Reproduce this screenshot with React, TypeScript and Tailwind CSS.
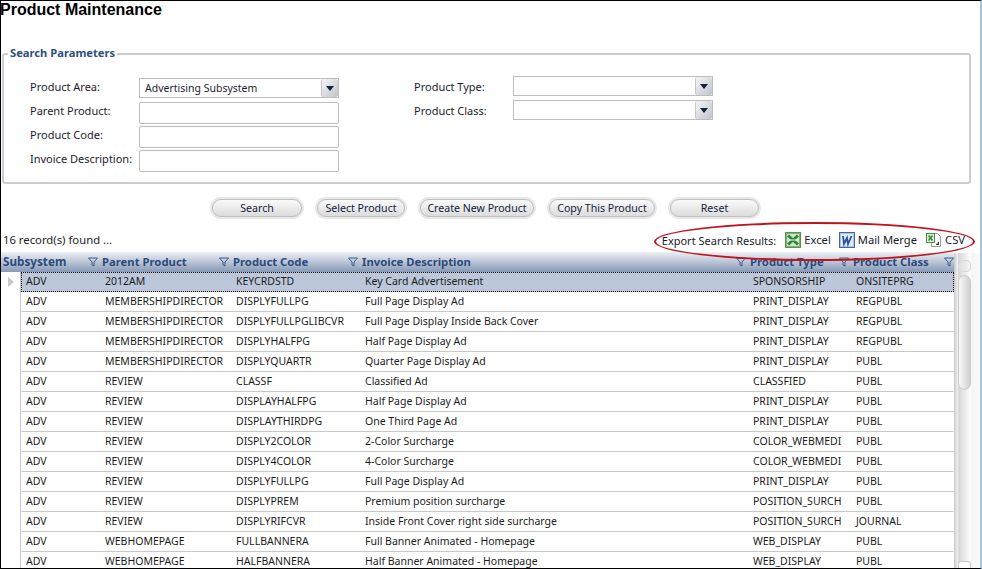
const rows = [
  ["ADV", "2012AM", "KEYCRDSTD", "Key Card Advertisement", "SPONSORSHIP", "ONSITEPRG"],
  ["ADV", "MEMBERSHIPDIRECTOR", "DISPLYFULLPG", "Full Page Display Ad", "PRINT_DISPLAY", "REGPUBL"],
  ["ADV", "MEMBERSHIPDIRECTOR", "DISPLYFULLPGLIBCVR", "Full Page Display Inside Back Cover", "PRINT_DISPLAY", "REGPUBL"],
  ["ADV", "MEMBERSHIPDIRECTOR", "DISPLYHALFPG", "Half Page Display Ad", "PRINT_DISPLAY", "REGPUBL"],
  ["ADV", "MEMBERSHIPDIRECTOR", "DISPLYQUARTR", "Quarter Page Display Ad", "PRINT_DISPLAY", "PUBL"],
  ["ADV", "REVIEW", "CLASSF", "Classified Ad", "CLASSFIED", "PUBL"],
  ["ADV", "REVIEW", "DISPLAYHALFPG", "Half Page Display Ad", "PRINT_DISPLAY", "PUBL"],
  ["ADV", "REVIEW", "DISPLAYTHIRDPG", "One Third Page Ad", "PRINT_DISPLAY", "PUBL"],
  ["ADV", "REVIEW", "DISPLY2COLOR", "2-Color Surcharge", "COLOR_WEBMEDI", "PUBL"],
  ["ADV", "REVIEW", "DISPLY4COLOR", "4-Color Surcharge", "COLOR_WEBMEDI", "PUBL"],
  ["ADV", "REVIEW", "DISPLYFULLPG", "Full Page Display Ad", "PRINT_DISPLAY", "PUBL"],
  ["ADV", "REVIEW", "DISPLYPREM", "Premium position surcharge", "POSITION_SURCH", "PUBL"],
  ["ADV", "REVIEW", "DISPLYRIFCVR", "Inside Front Cover right side surcharge", "POSITION_SURCH", "JOURNAL"],
  ["ADV", "WEBHOMEPAGE", "FULLBANNERA", "Full Banner Animated - Homepage", "WEB_DISPLAY", "PUBL"],
  ["ADV", "WEBHOMEPAGE", "HALFBANNERA", "Half Banner Animated - Homepage", "WEB_DISPLAY", "PUBL"],
];

function Funnel() {
  return (
    <svg width="10" height="10" viewBox="0 0 10 10" className="shrink-0" fill="none" stroke="#3a5a8c" strokeWidth="1">
      <path d="M0.5 1h9L6 5v4L4 8V5z" />
    </svg>
  );
}

function Arrow() {
  return (
    <div className="flex h-[18px] w-[17px] items-center justify-center rounded-[2px] border-l border-[#c4c4c4] bg-gradient-to-br from-[#f6f6f6] to-[#bfc3c9]">
      <svg width="8" height="5" viewBox="0 0 8 5"><path d="M0 0h8L4 5z" fill="#14233c" /></svg>
    </div>
  );
}

function Select({ value = "" }: { value?: string }) {
  return (
    <div className="flex h-5 w-[200px] items-center justify-between border border-[#bdbdbd] bg-white pl-[5px] text-[10.5px] text-[#1d1d2d]">
      <span>{value}</span>
      <Arrow />
    </div>
  );
}

function Input() {
  return <div className="h-[22px] w-[200px] rounded-[2px] border border-[#bdbdbd] bg-white" />;
}

function Btn({ text, w }: { text: string; w: string }) {
  return (
    <div className={"rounded-full bg-[#e8e8e8] p-[2px] " + w}>
      <div className="flex h-[18px] items-center justify-center rounded-full border border-[#c0c0c0] bg-gradient-to-b from-[#fafafa] to-[#dcdcdc] text-[10.6px] text-[#14233c]">
        {text}
      </div>
    </div>
  );
}

function Excel() {
  return (
    <svg width="16" height="16" viewBox="0 0 16 16" className="shrink-0">
      <rect x="0.5" y="0.5" width="15" height="15" fill="#7fb477" stroke="#5b8f55" />
      <rect x="2" y="2" width="12" height="12" fill="#cfe5c8" />
      <path d="M3 3.500l10 9M13 3.500l-10 9" stroke="#2c8a3a" strokeWidth="3" />
      <path d="M2 8h12" stroke="#e6f2e2" strokeWidth="1" />
    </svg>
  );
}

function Word() {
  return (
    <svg width="16" height="16" viewBox="0 0 16 16" className="shrink-0">
      <rect x="0.5" y="0.5" width="15" height="15" fill="#a9c2ea" stroke="#3f66b0" />
      <rect x="2" y="2" width="12" height="12" fill="#e3ecf9" />
      <path d="M4 4l1 8 3-6 1 6 3.500-8" fill="none" stroke="#2a52a3" strokeWidth="1.800" />
    </svg>
  );
}

function Csv() {
  return (
    <svg width="16" height="16" viewBox="0 0 16 16" className="shrink-0">
      <path d="M5.500 1.500h6l3 3v10h-9z" fill="#fff" stroke="#9a9a9a" />
      <rect x="0.500" y="1.500" width="8" height="9" fill="#dcecd6" stroke="#4c8a4a" />
      <path d="M2.500 3.500l4 5M6.500 3.500l-4 5" stroke="#2c8a3a" strokeWidth="1.400" />
      <path d="M10 13h3v-3h-1.200v1.800H10z" fill="#333" />
    </svg>
  );
}

export default function App() {
  return (
    <div className="relative h-[569px] w-[982px] overflow-hidden border-t border-r-2 border-b border-l border-t-black border-r-[#a9c3dc] border-b-black border-l-black bg-white font-['Noto_Sans',sans-serif] text-[10.5px] leading-none text-[#1c1c1c]">
      <h1 className="-ml-px h-[17px] pt-px font-['Liberation_Sans',sans-serif] text-[16px] leading-[16px] font-bold text-black">Product Maintenance</h1>

      <fieldset className="mt-[29px] mr-[9px] ml-px h-[137px] rounded-[3px] border-2 border-[#c9cdd1] pl-[26px]">
        <legend className="-ml-[22px] px-[2px] pb-[2px] text-[11.2px] font-bold text-[#2f4f7f]">Search Parameters</legend>
        <div className="mt-[18px] flex text-[11px] text-[#1c1c2c]">
          <div className="flex w-[384px] flex-col gap-[2px]">
            <div className="mb-[2px] flex items-start"><span className="w-[109px] shrink-0 pt-[3px]">Product Area:</span><Select value="Advertising Subsystem" /></div>
            <div className="flex items-start"><span className="w-[109px] shrink-0 pt-[3px]">Parent Product:</span><Input /></div>
            <div className="flex items-start"><span className="w-[109px] shrink-0 pt-[3px]">Product Code:</span><Input /></div>
            <div className="flex items-start"><span className="w-[109px] shrink-0 pt-[3px]">Invoice Description:</span><Input /></div>
          </div>
          <div className="-mt-[2px] flex flex-col gap-1">
            <div className="flex items-start"><span className="w-[99px] shrink-0 pt-[5px]">Product Type:</span><Select /></div>
            <div className="flex items-start"><span className="w-[99px] shrink-0 pt-[5px]">Product Class:</span><Select /></div>
          </div>
        </div>
      </fieldset>

      <div className="mt-[13px] ml-[209px] flex gap-[11px]">
        <Btn text="Search" w="w-[94px]" />
        <Btn text="Select Product" w="w-[92px]" />
        <Btn text="Create New Product" w="w-[118px]" />
        <Btn text="Copy This Product" w="w-[110px]" />
        <Btn text="Reset" w="w-[93px]" />
      </div>

      <div className="mt-[9px] flex h-[24px] items-center justify-between pr-[15px] pl-[2px] text-[11.3px]">
        <span>16 record(s) found ...</span>
        <div className="flex items-center text-[11.2px] text-[#1a1a2a]">
          <span className="text-[11px]">Export Search Results:</span>
          <span className="ml-[9px] flex items-center gap-[3px]"><Excel />Excel</span>
          <span className="ml-[8px] flex items-center gap-[3px]"><Word />Mail Merge</span>
          <span className="ml-[9px] flex items-center gap-[3px]"><Csv />CSV</span>
        </div>
      </div>

      <div className="flex">
        <div className="w-[953px]">
          <div className="flex h-5 items-center bg-gradient-to-b from-[#eef1f5] to-[#8799b6] pl-px text-[11.3px] font-bold text-[#2c4a7c]">
            <span className="w-[86px] pl-[1px] text-[11.7px]">Subsystem</span>
            <span className="flex w-[131px] items-center gap-[4px]"><Funnel />Parent Product</span>
            <span className="flex w-[129px] items-center gap-[4px]"><Funnel />Product Code</span>
            <span className="flex w-[388px] items-center gap-[4px]"><Funnel />Invoice Description</span>
            <span className="flex w-[103px] items-center gap-[4px]"><Funnel />Product Type</span>
            <span className="flex w-[105px] items-center gap-[4px]"><Funnel />Product Class</span>
            <Funnel />
          </div>
          {rows.map((r, i) => (
            <div key={r[2]} className="flex h-5 items-stretch">
              <div className="flex w-5 shrink-0 items-center justify-center border-r border-[#c8c8c8]">
                {i === 0 && <svg width="6" height="10" viewBox="0 0 6 10"><path d="M0 0l6 5-6 5z" fill="#c4c8cc" /></svg>}
              </div>
              <div className={"flex flex-1 items-center pb-[2px] " + (i === 0 ? "border border-dotted border-black bg-[#bcc8da]" : "border border-transparent border-b-[#c8c8c8]")}>
                <span className="w-[83px] pl-[4px]">{r[0]}</span>
                <span className="w-[131px]">{r[1]}</span>
                <span className="w-[129px]">{r[2]}</span>
                <span className="w-[388px]">{r[3]}</span>
                <span className="w-[103px]">{r[4]}</span>
                <span>{r[5]}</span>
              </div>
            </div>
          ))}
        </div>
        <div className="mt-px flex w-[26px] bg-gradient-to-r from-[#ececec] to-[#fafafa]">
          <div className="w-[4px] bg-gradient-to-r from-[#c8c8c8] to-[#f4f4f4]" />
          <div className="flex w-[13px] flex-col bg-gradient-to-r from-[#d6d6d6] to-white pt-[7px]">
            <div className="h-[12px] shrink-0 rounded-[4px] border border-[#d8d8d8] bg-gradient-to-r from-[#e0e0e0] to-[#f4f4f4]" />
            <div className="mt-[3px] h-[115px] shrink-0 rounded-full border border-[#c8cacc] bg-gradient-to-r from-[#f8f8f8] to-[#d0d0d0]" />
            <div className="flex-1" />
            <div className="h-[11px] shrink-0 rounded-t-[3px] border border-[#c8c8c8] bg-white" />
          </div>
        </div>
      </div>

      <div className="absolute top-[221px] left-[653px] h-[39px] w-[321px] rounded-[50%] border-2 border-[#c0141c]" />
    </div>
  );
}
